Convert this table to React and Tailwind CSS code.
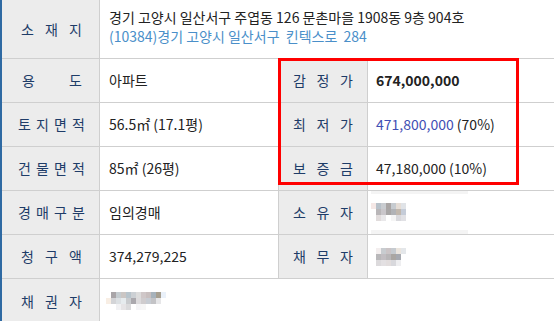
import React from "react";

const FONT = { fontFamily: '"Noto Sans CJK KR", "Noto Sans", sans-serif' };

const Label = ({ chars, pad = "px-[18px]", w = "w-[98px]" }) => (
  <div
    className={`${w} shrink-0 h-full bg-[#ececec] border-r border-[#cfcfcf] flex items-center justify-between ${pad} text-[14px] text-[#1e3c68]`}
  >
    {chars.split("").map((c, i) => (
      <span key={i}>{c}</span>
    ))}
  </div>
);

const Blur = ({ rows }) => (
  <div className="flex flex-col">
    {rows.map((row, i) => (
      <div key={i} className="flex">
        {row.map((c, j) => (
          <div key={j} className="w-[5px] h-[6px]" style={{ backgroundColor: c }} />
        ))}
      </div>
    ))}
  </div>
);

const ownerBlur = [
  ["#f5e8e6", "#b8c1c9", "#c9ccd0", "#a9a5a4", "#c6cbd0", "#e5ddd6", "#e0e3e7", "#ffffff"],
  ["#ffffff", "#b9b6b8", "#c9c6ca", "#a8a6a6", "#b1b3b7", "#c1b8ae", "#c5ccd8", "#ffffff"],
  ["#ffffff", "#e1dcdc", "#e9e8ea", "#ffffff", "#f5f5f5", "#d9d9dd", "#e1e1e5", "#ffffff"],
];

const debtorBlur = [
  ["#ffffff", "#f3eeee", "#c8ccd0", "#cbc4c6", "#c6cbd0", "#ebe5de", "#e4e7ea", "#ffffff"],
  ["#ffffff", "#b9b8ba", "#c2bec2", "#b8b6b8", "#aaa6a2", "#a6a9b0", "#ffffff", "#ffffff"],
  ["#ffffff", "#dcdadc", "#e3e0e2", "#e2dddd", "#d8d8dc", "#eeeef0", "#ffffff", "#ffffff"],
];

const creditorBlur = [
  ["#ffffff", "#a9a5a8", "#c5ccd0", "#cbc6c4", "#b8c4cc", "#ccd0d4", "#dcdcdc", "#cfc7c8", "#c8bfbf", "#a7b2bb", "#a79f90", "#eaf1fa"],
  ["#f8eee4", "#d3d4d7", "#dce0e3", "#e6ebee", "#c9cbce", "#aaa8ad", "#dcdadc", "#cfccce", "#c7ccd3", "#c3c3c6", "#e6e6e8", "#ffffff"],
  ["#ffffff", "#ffffff", "#f1f1f3", "#e6e4e6", "#dadadc", "#ffffff", "#f4f4f6", "#f6f6f6", "#ffffff", "#ffffff", "#ffffff", "#ffffff"],
];

export default function App() {
  return (
    <div
      className="relative w-[554px] h-[321px] overflow-hidden bg-white border-l-2 border-[#2f6aa3] text-[#222]"
      style={FONT}
    >
      {/* 소재지 */}
      <div className="flex h-[59px] border-b border-[#cfcfcf]">
        <Label chars="소재지" pad="pl-[19px] pr-[17px]" />
        <div className="flex-1 pl-[9px] pt-[8px] text-[14px] leading-[19px] whitespace-nowrap">
          <div>경기 고양시 일산서구 주엽동 126 문촌마을 1908동 9층 904호</div>
          <div className="text-[#4a8fc9]">(10384)경기 고양시 일산서구&nbsp; 킨텍스로&nbsp; 284</div>
        </div>
      </div>

      {/* 용도 / 감정가 */}
      <div className="flex h-[44px] border-b border-[#cfcfcf]">
        <Label chars="용도" pad="pl-[20px] pr-[17px]" />
        <div className="w-[179px] shrink-0 border-r border-[#cfcfcf] flex items-center pl-[9px] text-[14px]">아파트</div>
        <Label chars="감정가" w="w-[89px]" pad="px-[14px]" />
        <div className="flex-1 flex items-center pl-[8px] text-[14px] font-semibold">674,000,000</div>
      </div>

      {/* 토지면적 / 최저가 */}
      <div className="flex h-[44px] border-b border-[#cfcfcf]">
        <Label chars="토지면적" pad="pl-[16px] pr-[14px]" />
        <div className="w-[179px] shrink-0 border-r border-[#cfcfcf] flex items-center pl-[9px] text-[14px]">56.5㎡ (17.1평)</div>
        <Label chars="최저가" w="w-[89px]" pad="px-[14px]" />
        <div className="flex-1 flex items-center pl-[8px] text-[14px]">
          <span className="text-[#3f4fb4]">471,800,000</span>&nbsp;(70%)
        </div>
      </div>

      {/* 건물면적 / 보증금 */}
      <div className="flex h-[44px] border-b border-[#cfcfcf]">
        <Label chars="건물면적" pad="pl-[16px] pr-[14px]" />
        <div className="w-[179px] shrink-0 border-r border-[#cfcfcf] flex items-center pl-[9px] text-[14px]">85㎡ (26평)</div>
        <Label chars="보증금" w="w-[89px]" pad="px-[14px]" />
        <div className="flex-1 flex items-center pl-[8px] text-[14px]">47,180,000 (10%)</div>
      </div>

      {/* 경매구분 / 소유자 */}
      <div className="flex h-[44px] border-b border-[#cfcfcf]">
        <Label chars="경매구분" pad="pl-[16px] pr-[14px]" />
        <div className="w-[179px] shrink-0 border-r border-[#cfcfcf] flex items-center pl-[9px] text-[14px]">임의경매</div>
        <Label chars="소유자" w="w-[89px]" pad="px-[14px]" />
        <div className="flex-1 flex flex-col justify-between pl-[3px]">
          <div className="w-[97px] h-[3px] bg-[#f4f4f4]" />
          <Blur rows={ownerBlur} />
          <div className="w-[97px] h-[4px] bg-[#f4f4f4]" />
        </div>
      </div>

      {/* 청구액 / 채무자 */}
      <div className="flex h-[44px] border-b border-[#cfcfcf]">
        <Label chars="청구액" pad="pl-[19px] pr-[17px]" />
        <div className="w-[179px] shrink-0 border-r border-[#cfcfcf] flex items-center pl-[9px] text-[14px]">374,279,225</div>
        <Label chars="채무자" w="w-[89px]" pad="px-[14px]" />
        <div className="flex-1 flex items-center pl-[3px]">
          <Blur rows={debtorBlur} />
        </div>
      </div>

      {/* 채권자 */}
      <div className="flex h-[44px]">
        <Label chars="채권자" pad="pl-[19px] pr-[17px]" />
        <div className="flex-1 flex items-center pl-[6px]">
          <Blur rows={creditorBlur} />
        </div>
      </div>

      {/* highlight box */}
      <div className="absolute left-[276px] top-[58px] w-[241px] h-[127px] border-[3px] border-[#ff0000] pointer-events-none" />
    </div>
  );
}
